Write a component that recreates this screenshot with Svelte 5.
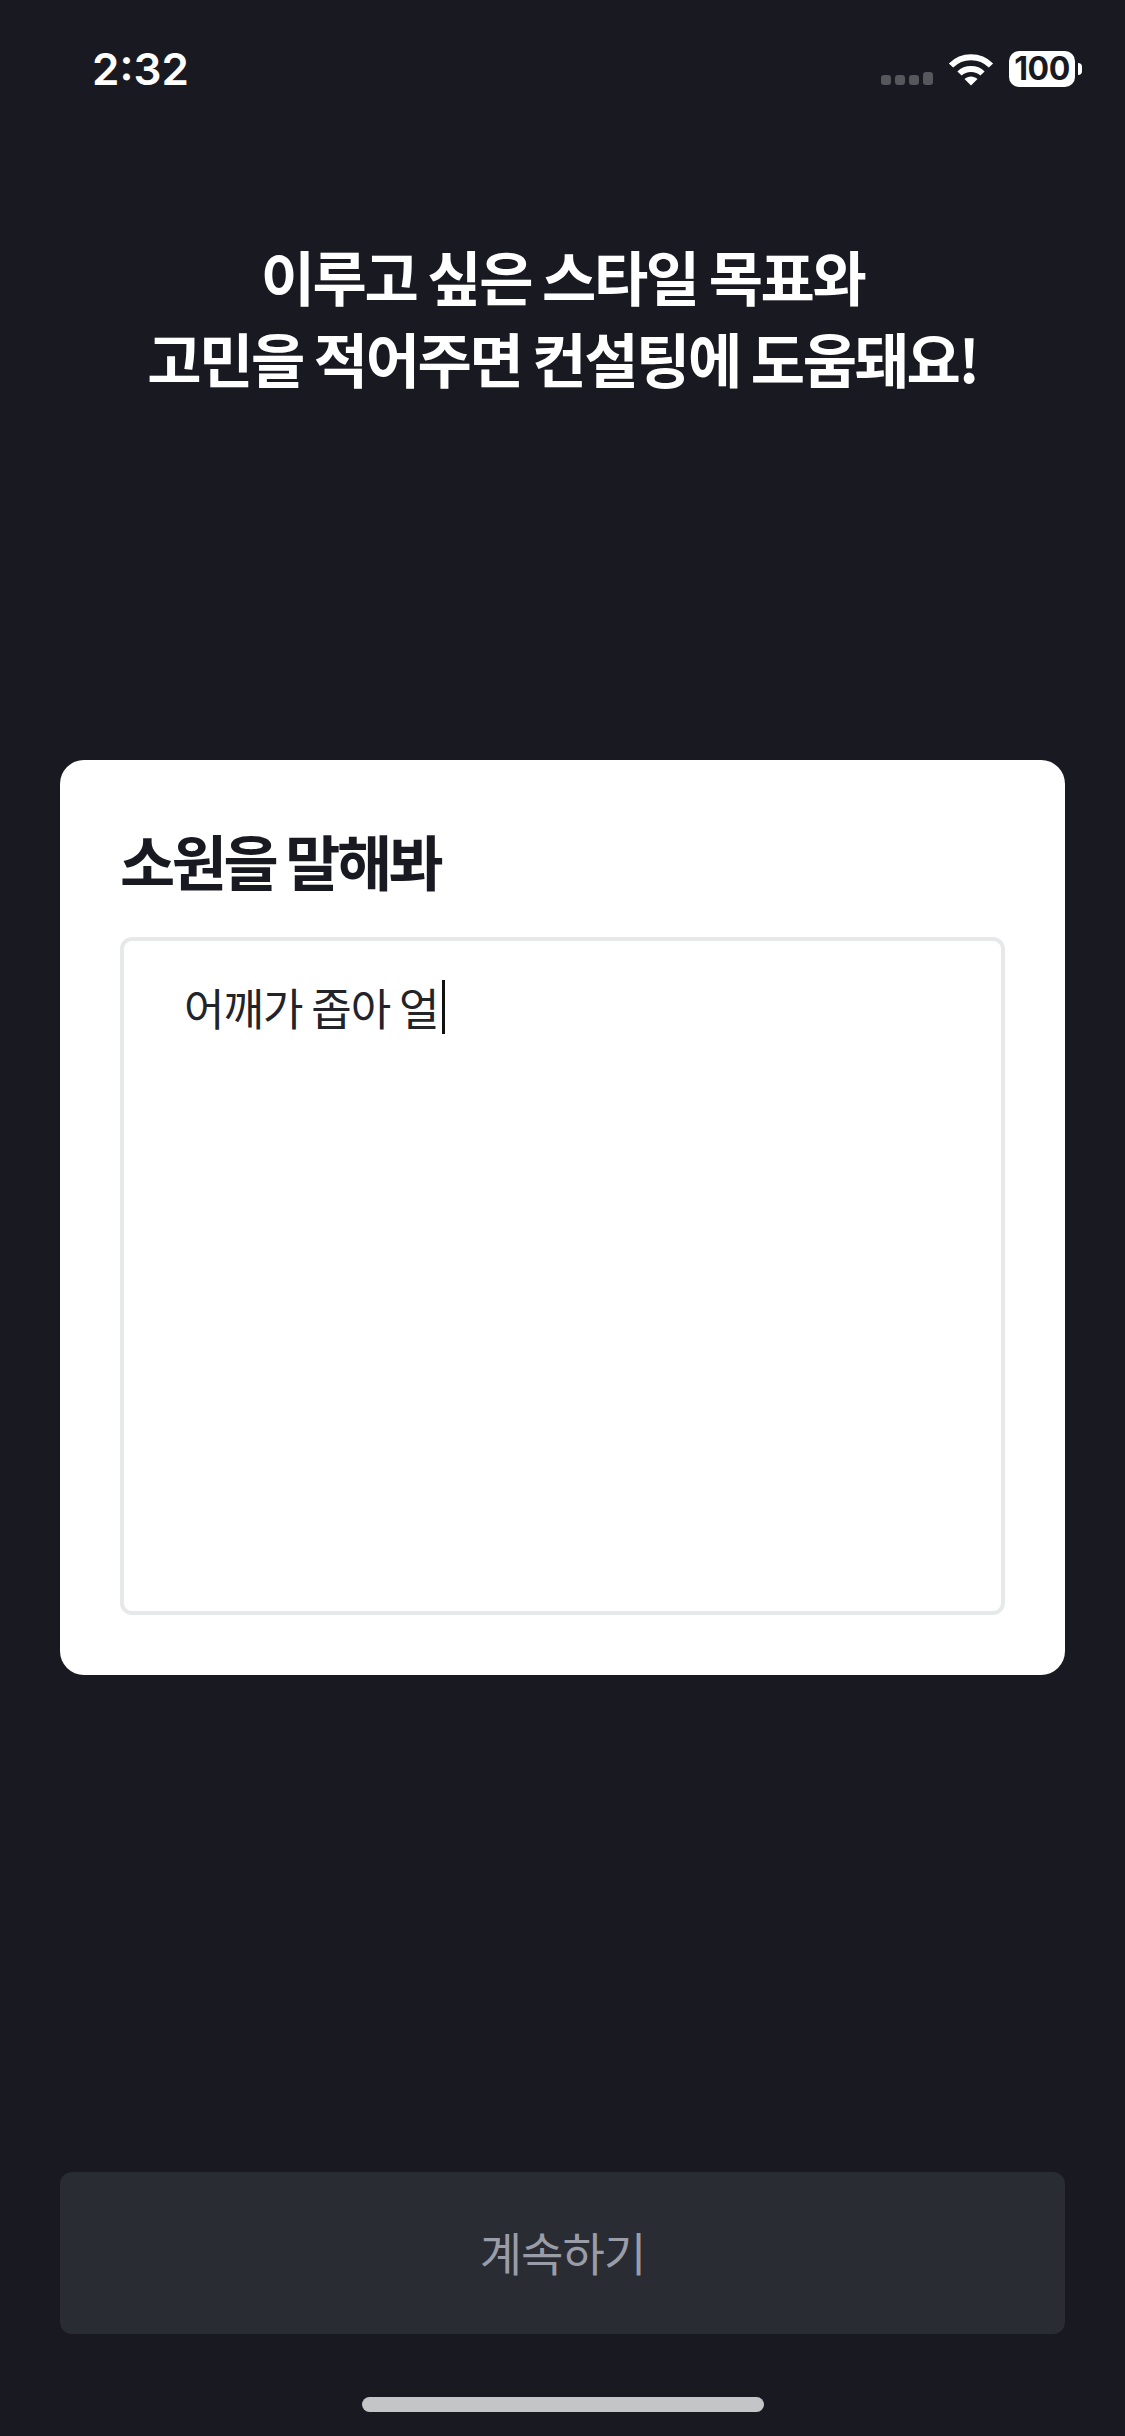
<script>
  let text = "어깨가 좁아 얼";
</script>

<main class="screen">
  <header class="status">
    <span class="time">2:32</span>
    <div class="indicators">
      <div class="signal">
        <i></i><i></i><i></i><i class="tall"></i>
      </div>
      <svg class="wifi" viewBox="0 0 46 33" aria-hidden="true">
        <path d="M3 12.5C14 1.5 32 1.5 43 12.5" fill="none" stroke="#fff" stroke-width="6" stroke-linecap="butt" />
        <path d="M11.5 20.5C17.5 14.5 28.5 14.5 34.5 20.5" fill="none" stroke="#fff" stroke-width="6" stroke-linecap="butt" />
        <path d="M16.5 26C20 22.5 26 22.5 29.5 26L23 32.5Z" fill="#fff" />
      </svg>
      <div class="battery">
        <span class="level">100</span>
        <span class="nub"></span>
      </div>
    </div>
  </header>

  <h1>이루고 싶은 스타일 목표와<br />고민을 적어주면 컨설팅에 도움돼요!</h1>

  <section class="card">
    <h2>소원을 말해봐</h2>
    <div class="field">
      <span class="value">{text}</span><span class="caret"></span>
    </div>
  </section>

  <button type="button" class="next" disabled>계속하기</button>
  <div class="home-bar"></div>
</main>

<style>
  :global(body) {
    margin: 0;
    background: #191a21;
  }

  .screen {
    box-sizing: border-box;
    height: 2436px;
    padding: 0 60px;
    display: flex;
    flex-direction: column;
    background: #191a21;
    font-family: "Noto Sans CJK KR", "Noto Sans", sans-serif;
    overflow: hidden;
  }

  .status {
    height: 51px;
    margin: 44px -10px 0 32px;
    display: flex;
    justify-content: space-between;
    align-items: flex-start;
  }

  .time {
    font-family: Inter, "Liberation Sans", sans-serif;
    font-size: 44px;
    font-weight: 600;
    line-height: 50px;
    letter-spacing: 0;
    color: #fff;
  }

  .indicators {
    display: flex;
    align-items: flex-start;
    gap: 15px;
    margin-top: 7px;
  }

  .signal {
    display: flex;
    align-items: flex-end;
    gap: 4px;
    height: 34px;
  }

  .signal i {
    width: 10px;
    height: 10px;
    border-radius: 3px;
    background: #55575c;
  }

  .signal i.tall {
    height: 13px;
  }

  .wifi {
    width: 46px;
    height: 33px;
    margin-top: 2px;
  }

  .battery {
    position: relative;
    width: 66px;
    height: 36px;
    border-radius: 10px;
    background: #fff;
    display: flex;
    align-items: center;
    justify-content: center;
  }

  .level {
    font-family: Inter, "Liberation Sans", sans-serif;
    font-size: 32px;
    font-weight: 700;
    line-height: 36px;
    letter-spacing: -0.5px;
    color: #191a21;
  }

  .nub {
    position: absolute;
    left: 69px;
    top: 12px;
    width: 4px;
    height: 12px;
    border-radius: 0 6px 6px 0;
    background: #fff;
  }

  h1 {
    margin: 140px 0 0;
    font-size: 59px;
    font-weight: 700;
    line-height: 82px;
    letter-spacing: -2.4px;
    text-align: center;
    color: #fff;
  }

  .card {
    box-sizing: border-box;
    height: 915px;
    margin-top: 361px;
    padding: 60px;
    border-radius: 24px;
    background: #fff;
    display: flex;
    flex-direction: column;
  }

  h2 {
    margin: -3px 0 35px;
    font-size: 60px;
    font-weight: 700;
    line-height: 85px;
    letter-spacing: -3.5px;
    color: #191a21;
  }

  .field {
    box-sizing: border-box;
    flex: 1;
    padding: 39px 60px;
    border: 4px solid #e6e8ea;
    border-radius: 12px;
    display: flex;
    align-items: flex-start;
  }

  .value {
    font-size: 44px;
    line-height: 54px;
    font-weight: 400;
    letter-spacing: -1px;
    color: #22242a;
    white-space: pre;
  }

  .caret {
    width: 3px;
    height: 54px;
    margin-left: 3px;
    background: #111;
  }

  .next {
    height: 162px;
    margin-top: 497px;
    padding: 0 0 5px;
    border: 0;
    border-radius: 12px;
    background: #292c33;
    color: #9a9ca8;
    font: inherit;
    font-size: 46px;
    font-weight: 400;
    letter-spacing: -0.9px;
  }

  .home-bar {
    align-self: center;
    width: 402px;
    height: 15px;
    margin-top: 63px;
    border-radius: 8px;
    background: #c4c5c7;
  }
</style>
